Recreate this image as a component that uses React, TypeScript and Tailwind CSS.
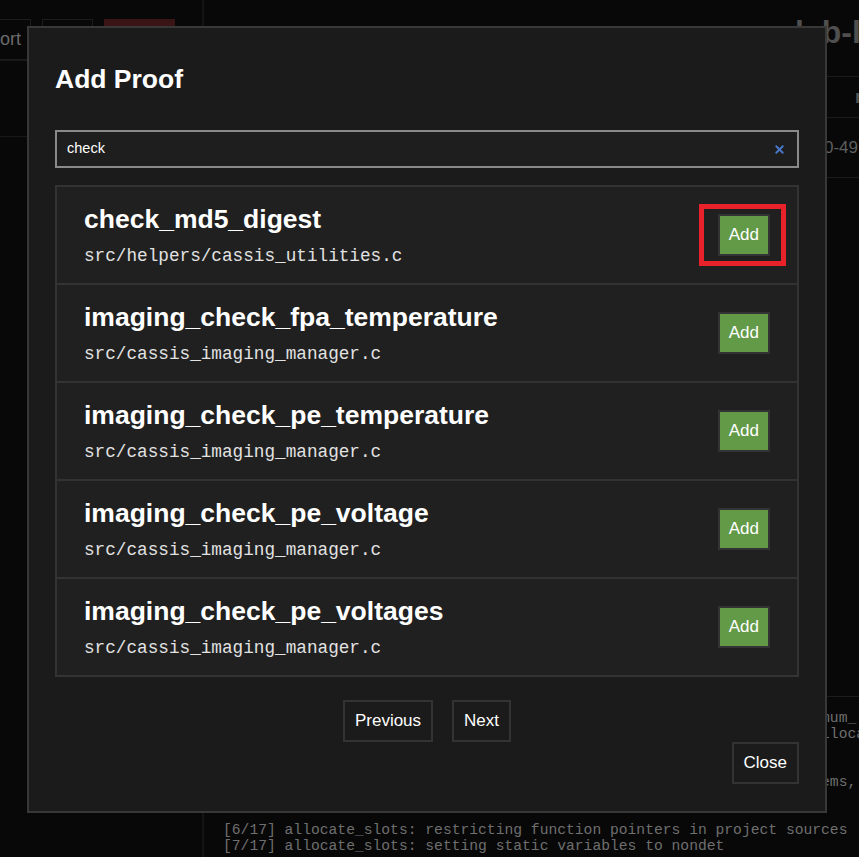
import { X } from "lucide-react"

type Proof = { name: string; file: string; highlight?: boolean }

const proofs: Proof[] = [
  { name: "check_md5_digest", file: "src/helpers/cassis_utilities.c", highlight: true },
  { name: "imaging_check_fpa_temperature", file: "src/cassis_imaging_manager.c" },
  { name: "imaging_check_pe_temperature", file: "src/cassis_imaging_manager.c" },
  { name: "imaging_check_pe_voltage", file: "src/cassis_imaging_manager.c" },
  { name: "imaging_check_pe_voltages", file: "src/cassis_imaging_manager.c" },
]

// console output behind the modal; most of it is covered
const logLines = [
  "[3/17] allocate_slots: bounding array sizes to the limit set in maximum_ size",
  "[3/17] allocate_slots: each array may have at most this many slots allocated",
  "[4/17] allocate_slots: scanning harness entry points",
  "[4/17] allocate_slots: 5 candidate globals found",
  "[5/17] allocate_slots: restricting sizes of dynamically allocated items, structs",
  "[5/17] allocate_slots: done",
  "",
  "[6/17] allocate_slots: restricting function pointers in project sources",
  "[7/17] allocate_slots: setting static variables to nondet",
]

function Background() {
  return (
    <div className="flex h-full">
      {/* sidebar */}
      <aside className="flex w-[204px] shrink-0 flex-col border-r-2 border-[#141414]">
        <div className="flex h-[61px] gap-[11px] border-b border-[#181818] pt-[19px]">
          <button className="-ml-[40px] h-[41px] border border-[#1c1c1c] px-[9px] text-[18px] text-[#6b6b6b]">
            Import
          </button>
          <button className="h-[41px] w-[51px] border border-[#1c1c1c]" />
          <button className="h-[41px] w-[71px] bg-[#3a1515]" />
        </div>
        <div className="h-[76px] border-b border-[#181818]" />
      </aside>

      {/* main */}
      <main className="flex min-w-0 flex-1 flex-col overflow-hidden">
        <h1 className="ml-[591px] mt-[16px] whitespace-nowrap text-[32px] font-bold leading-[32px] text-[#4f4f4f]">
          lab-lab
        </h1>
        <div className="mt-[28px] flex h-[42px] items-center border-y border-[#1a1a1a] pl-[651px] text-[18px] font-bold text-[#555]">
          ra
        </div>
        <div className="flex h-[60px] items-center whitespace-nowrap border-b border-[#1a1a1a] pl-[620px] text-[17px] text-[#5f5f5f]">
          0-49
        </div>

        <div className="mt-auto h-[161px] border-t border-[#1c1c1c] pl-[19px] pt-[13px] font-['Liberation_Mono',monospace] text-[14.67px] leading-[16px] text-[#6f6f6f]">
          {logLines.map((line, i) => (
            <div key={i} className="h-[16px] whitespace-pre">
              {line}
            </div>
          ))}
        </div>
      </main>
    </div>
  )
}

function ProofRow({ proof, last }: { proof: Proof; last: boolean }) {
  return (
    <div
      className={
        "flex items-center justify-between border-x-2 border-t-2 border-[#333] bg-[#202020] px-[27px] " +
        (last ? "border-b-2" : "")
      }
    >
      <div className="pb-[17px] pt-[17px]">
        <div className="text-[26.5px] font-bold leading-[30px] text-white">{proof.name}</div>
        <div className="mt-[12px] font-['Liberation_Mono',monospace] text-[17.7px] leading-[20px] text-[#e2e2e2]">
          {proof.file}
        </div>
      </div>
      <div className="relative">
        {proof.highlight && (
          <span className="pointer-events-none absolute -bottom-[10px] -left-[19px] -right-[16px] -top-[10px] border-[5px] border-[#e8212a]" />
        )}
        <button className="flex h-[42px] items-center border-2 border-[#333] bg-[#629a48] px-[9px] text-[17px] text-white">
          Add
        </button>
      </div>
    </div>
  )
}

function AddProofModal() {
  return (
    <div className="absolute left-[27px] top-[26px] w-[800px] border-2 border-[#383838] bg-[#1b1b1b] px-[26px] pb-[27px] pt-[36px]">
      <h2 className="text-[26.5px] font-bold leading-[30px] text-white">Add Proof</h2>

      <div className="mt-[36px] flex h-[38px] items-center justify-between border-2 border-[#8a8a8a] bg-[#1e1e1e] pl-[10px] pr-[11px]">
        <span className="text-[14.5px] text-white">check</span>
        <X className="h-[13px] w-[13px] text-[#4a78c8]" strokeWidth={3.5} />
      </div>

      <div className="mt-[17px] flex flex-col">
        {proofs.map((p, i) => (
          <ProofRow key={p.name} proof={p} last={i === proofs.length - 1} />
        ))}
      </div>

      <div className="mt-[23px] flex justify-center gap-[19px]">
        <button className="flex h-[42px] items-center border-2 border-[#333] px-[10px] text-[17px] text-white">
          Previous
        </button>
        <button className="flex h-[42px] items-center border-2 border-[#333] px-[10px] text-[17px] text-white">
          Next
        </button>
      </div>

      <div className="flex justify-end">
        <button className="flex h-[42px] items-center border-2 border-[#333] px-[10px] text-[17px] text-white">
          Close
        </button>
      </div>
    </div>
  )
}

export default function App() {
  return (
    <div className="relative h-[857px] w-[859px] overflow-hidden bg-[#080808] font-['Liberation_Sans',Arial,sans-serif]">
      <Background />
      <AddProofModal />
    </div>
  )
}
